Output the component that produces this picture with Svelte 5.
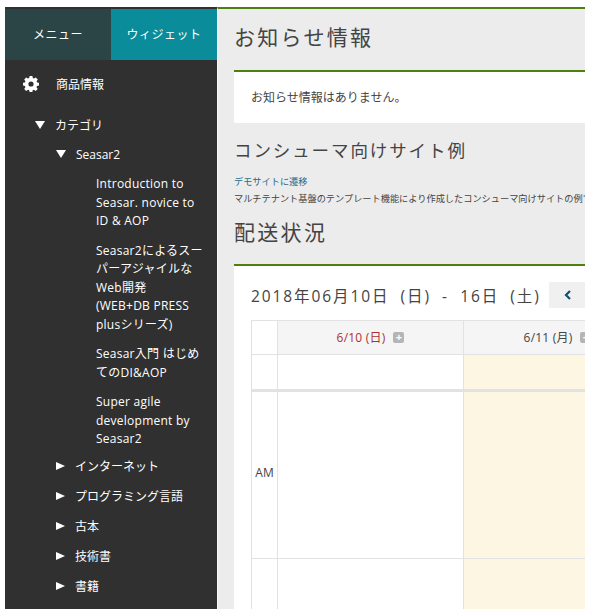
<script>
  let tree = [
    "インターネット",
    "プログラミング言語",
    "古本",
    "技術書",
    "書籍",
  ];
  let books = [
    ["Introduction to", "Seasar. novice to", "ID & AOP"],
    ["Seasar2によるスー", "パーアジャイルな", "Web開発", "(WEB+DB PRESS", "plusシリーズ)"],
    ["Seasar入門 はじめ", "てのDI&AOP"],
    ["Super agile", "development by", "Seasar2"],
  ];
</script>

<div class="page">
  <aside class="side">
    <div class="tabs">
      <div class="tab">メニュー</div>
      <div class="tab active">ウィジェット</div>
    </div>
    <div class="menu-head">
      <svg class="gear" width="16" height="16" viewBox="0 0 16 16">
        <path fill="#fff" fill-rule="evenodd" d="M6.6 0h2.8l.4 2.1 1.2.5L12.800 1.400l2 2-1.200 1.800.5 1.200 1.900.4v2.800l-2 .4-.5 1.200 1.200 1.800-2 2-1.800-1.200-1.200.5-.4 2H6.600l-.4-2-1.200-.5-1.800 1.200-2-2 1.200-1.800-.5-1.200-1.900-.4V6.800l1.900-.4.500-1.200-1.200-1.800 2-2L5 2.600l1.200-.5zM8 5.400a2.600 2.600 0 1 0 0 5.200 2.600 2.600 0 0 0 0-5.200z" />
      </svg>
      <span>商品情報</span>
    </div>
    <div class="row lv1"><i class="down"></i><span>カテゴリ</span></div>
    <div class="row lv2"><i class="down"></i><span>Seasar2</span></div>
    <ul class="books">
      {#each books as lines}
        <li>
          {#each lines as line}
            <div>{line}</div>
          {/each}
        </li>
      {/each}
    </ul>
    {#each tree as name}
      <div class="row lv2 closed"><i class="right"></i><span>{name}</span></div>
    {/each}
  </aside>

  <main class="main">
    <h1>お知らせ情報</h1>
    <section class="notice">お知らせ情報はありません。</section>
    <h2>コンシューマ向けサイト例</h2>
    <a class="link" href="#demo">デモサイトに遷移</a>
    <p class="desc">マルチテナント基盤のテンプレート機能により作成したコンシューマ向けサイトの例です。</p>
    <h1 class="delivery">配送状況</h1>
    <section class="panel">
      <div class="range">
        <span>2018年06月10日 (日) - 16日 (土)</span>
        <button class="prev" aria-label="前の週">
          <svg width="8" height="10" viewBox="0 0 8 10"><path d="M6 1 2 5l4 4" fill="none" stroke="#14506e" stroke-width="2.200" /></svg>
        </button>
      </div>
      <div class="cal">
        <div class="cal-row head">
          <div class="c time"></div>
          <div class="c day sun">6/10 (日) <b class="plus">+</b></div>
          <div class="c day">6/11 (月) <b class="plus">+</b></div>
        </div>
        <div class="cal-row allday">
          <div class="c time"></div>
          <div class="c"></div>
          <div class="c today"></div>
        </div>
        <div class="cal-row am">
          <div class="c time">AM</div>
          <div class="c"></div>
          <div class="c today"></div>
        </div>
        <div class="cal-row pm">
          <div class="c time"></div>
          <div class="c"></div>
          <div class="c today"></div>
        </div>
      </div>
    </section>
  </main>
</div>

<style>
  :global(body) {
    background: #fff;
    overflow: hidden;
  }
  .page {
    display: flex;
    width: 580px;
    height: 602px;
    margin: 7px 0 0 5px;
    font-family: "Open Sans", "Noto Sans CJK JP", sans-serif;
    overflow: hidden;
  }
  .side {
    width: 212px;
    flex: none;
    background: #303030;
    color: #fff;
    font-size: 12px;
    padding-top: 2px;
    box-sizing: border-box;
  }
  .tabs {
    display: flex;
    height: 51px;
  }
  .tab {
    width: 106px;
    background: #2b4446;
    display: flex;
    align-items: center;
    justify-content: center;
    font-size: 12px;
    letter-spacing: 0.5px;
    padding-bottom: 2px;
    box-sizing: border-box;
  }
  .tab.active {
    background: #0b8c9a;
  }
  .menu-head {
    display: flex;
    align-items: center;
    height: 48px;
    padding: 0 0 2px 18px;
  }
  .gear {
    margin-right: 17px;
  }
  .row {
    display: flex;
    align-items: center;
    height: 30px;
  }
  .lv1 {
    padding-left: 30px;
  }
  .lv1 i {
    margin-right: 11px;
  }
  .lv2 {
    padding-left: 51px;
  }
  .lv1 + .lv2 {
    margin-top: -1px;
  }
  .row i {
    width: 0;
    height: 0;
    margin-right: 10px;
  }
  .down {
    border-left: 5px solid transparent;
    border-right: 5px solid transparent;
    border-top: 8px solid #fff;
  }
  .right {
    border-top: 4px solid transparent;
    border-bottom: 4px solid transparent;
    border-left: 9px solid #fff;
  }
  .books {
    list-style: none;
    margin: 0;
    padding: 0 0 0 91px;
    line-height: 18.5px;
    font-size: 12px;
    letter-spacing: 0.25px;
  }
  .books li {
    margin: 6px 0 11px;
  }
  .books li:last-child {
    margin-bottom: 2px;
  }
  .main {
    flex: 1;
    min-width: 0;
    background: #ececec;
    border-top: 2px solid #4f7f0c;
    border-left: 1px solid #f6f6f6;
    padding: 0 0 0 16px;
    color: #444;
    overflow: hidden;
  }
  h1 {
    margin: 0;
    font-size: 21px;
    font-weight: 400;
    letter-spacing: 2.300px;
    line-height: 28px;
    padding-top: 14px;
    height: 61px;
    box-sizing: border-box;
  }
  .notice {
    background: #fff;
    border-top: 2px solid #4f7f0c;
    padding: 0 0 2px 17px;
    height: 49px;
    display: flex;
    align-items: center;
    font-size: 12px;
    white-space: nowrap;
  }
  h2 {
    margin: 14px 0 12px;
    font-size: 17.500px;
    font-weight: 400;
    letter-spacing: 1.900px;
    line-height: 26px;
  }
  .link {
    display: block;
    color: #2a6a8a;
    font-size: 9.200px;
    line-height: 14px;
    text-decoration: none;
  }
  .desc {
    margin: 3px 0 0;
    font-size: 9.200px;
    line-height: 14px;
    white-space: nowrap;
  }
  h1.delivery {
    padding-top: 12px;
    height: 58px;
  }
  .panel {
    background: #fff;
    border-top: 2px solid #4f7f0c;
    padding: 16px 0 0 17px;
    height: 400px;
  }
  .range {
    display: flex;
    align-items: center;
    height: 26px;
    font-size: 15.500px;
    letter-spacing: 1.900px;
    word-spacing: 5.300px;
    white-space: nowrap;
  }
  .prev {
    width: 36px;
    height: 26px;
    border: 0;
    margin-left: 8px;
    background: #f0f0f0;
    flex: none;
    text-align: left;
    padding: 0 0 0 15px;
  }
  .cal {
    margin-top: 12px;
    width: 400px;
    border-top: 1px solid #e2e2e2;
  }
  .cal-row {
    display: grid;
    grid-template-columns: 26px 186px 188px;
    border-bottom: 1px solid #e2e2e2;
  }
  .c {
    border-left: 1px solid #e2e2e2;
    box-sizing: border-box;
  }
  .head {
    height: 33px;
  }
  .head .day {
    background: #f5f5f5;
    display: flex;
    align-items: center;
    justify-content: center;
    gap: 8px;
    font-size: 12px;
    letter-spacing: 0.2px;
    padding-bottom: 1px;
  }
  .sun {
    color: #a83232;
  }
  .plus {
    width: 11px;
    height: 11px;
    border-radius: 2px;
    background: #b5b5b5;
    color: #fff;
    font-size: 11px;
    line-height: 10px;
    text-align: center;
  }
  .allday {
    height: 34px;
    border-bottom: 3px solid #e2e2e2;
  }
  .today {
    background: #fdf6e3;
  }
  .time {
    display: flex;
    align-items: center;
    justify-content: center;
    font-size: 12px;
    padding-bottom: 6px;
  }
  .am {
    height: 166px;
  }
  .pm {
    height: 60px;
    border-bottom: 0;
  }
</style>
